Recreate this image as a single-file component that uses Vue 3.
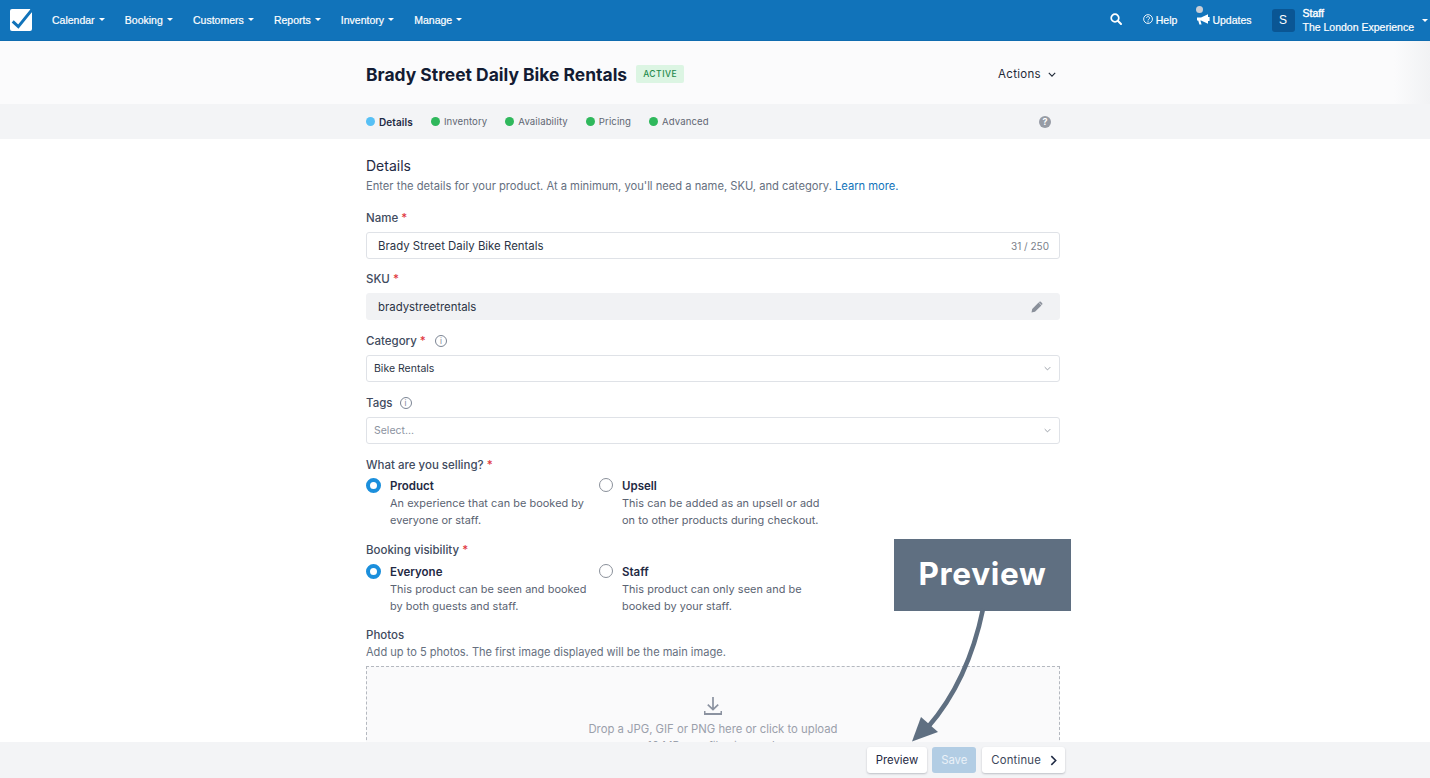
<script setup>
const navItems = ['Calendar', 'Booking', 'Customers', 'Reports', 'Inventory', 'Manage']
const steps = [
  { label: 'Details', active: true },
  { label: 'Inventory' },
  { label: 'Availability' },
  { label: 'Pricing' },
  { label: 'Advanced' }
]
const selling = [
  { title: 'Product', lines: ['An experience that can be booked by', 'everyone or staff.'], on: true },
  { title: 'Upsell', lines: ['This can be added as an upsell or add', 'on to other products during checkout.'] }
]
const visibility = [
  { title: 'Everyone', lines: ['This product can be seen and booked', 'by both guests and staff.'], on: true },
  { title: 'Staff', lines: ['This product can only seen and be', 'booked by your staff.'] }
]
</script>

<template>
  <div class="page">
    <nav class="nav">
      <svg class="logo" viewBox="0 0 22 22" width="22" height="22">
        <path d="M2 0H22V20a2 2 0 0 1-2 2H2a2 2 0 0 1-2-2V2a2 2 0 0 1 2-2Z" fill="#fff" />
        <path d="M16.5 0H22V4L20 0Z" fill="#1173ba" />
        <path d="M2.7 12.4 8.3 17.6 21.6 1.2" fill="none" stroke="#1173ba" stroke-width="3" />
      </svg>
      <ul class="nav-list">
        <li v-for="item in navItems" :key="item" class="nav-item">{{ item }}<i class="caret"></i></li>
      </ul>
      <div class="nav-right">
        <svg class="search" viewBox="0 0 12 12" width="12" height="12">
          <circle cx="5" cy="5" r="3.8" fill="none" stroke="#fff" stroke-width="1.7" />
          <path d="M7.8 7.8 11 11" stroke="#fff" stroke-width="2" stroke-linecap="round" />
        </svg>
        <span class="nav-link help">
          <svg viewBox="0 0 12 12" width="11" height="11">
            <circle cx="5.5" cy="5.5" r="4.8" fill="none" stroke="#fff" stroke-width="1" />
            <path d="M3.9 4.4a1.6 1.6 0 1 1 2.5 1.3c-.6.4-.9.7-.9 1.3" fill="none" stroke="#fff" stroke-width="1" />
            <circle cx="5.5" cy="8.5" r=".7" fill="#fff" />
          </svg>
          Help
        </span>
        <span class="nav-link updates">
          <i class="dot"></i>
          <svg viewBox="0 0 13 11" width="13" height="11">
            <path d="M0 3.5H4L11 0.3V9.7L4 6.6H3.4L4.6 10.6H2.4L1.2 6.6H0Z" fill="#fff" />
            <path d="M11 3h1.6v4H11z" fill="#fff" />
          </svg>
          Updates
        </span>
        <div class="account">
          <span class="avatar">S</span>
          <span class="account-text"><b>Staff</b><span>The London Experience</span></span>
          <i class="caret account-caret"></i>
        </div>
      </div>
    </nav>

    <header class="head">
      <div class="col head-row">
        <h1>Brady Street Daily Bike Rentals</h1>
        <span class="badge">ACTIVE</span>
        <span class="actions">Actions
          <svg viewBox="0 0 10 6" width="8" height="5"><path d="M1 1l4 4 4-4" fill="none" stroke="#1f2937" stroke-width="1.4" /></svg>
        </span>
      </div>
      <i class="edge"></i>
    </header>

    <div class="steps">
      <div class="col steps-row">
        <span v-for="s in steps" :key="s.label" class="step" :class="{ active: s.active }"><i></i>{{ s.label }}</span>
        <span class="qmark">?</span>
      </div>
    </div>

    <main class="col form">
      <h2>Details</h2>
      <p class="sub">Enter the details for your product. At a minimum, you'll need a name, SKU, and category. <a>Learn more.</a></p>

      <label class="lbl l-name">Name <em>*</em></label>
      <div class="field"><span>Brady Street Daily Bike Rentals</span><small>31 / 250</small></div>

      <label class="lbl l-sku">SKU <em>*</em></label>
      <div class="field readonly"><span>bradystreetrentals</span>
        <svg viewBox="0 0 12 12" width="12" height="12"><path d="M0.5 11.5 1.2 8 7.6 1.6 10.4 4.4 4 10.8ZM8.4 .8a1 1 0 0 1 1.4 0l1.4 1.4a1 1 0 0 1 0 1.4l-.5.5L7.9 1.3Z" fill="#8a909a" /></svg>
      </div>

      <label class="lbl l-cat">Category <em>*</em>
        <span class="info i-cat">i</span></label>
      <div class="field select"><span>Bike Rentals</span>
        <svg viewBox="0 0 10 6" width="7" height="5"><path d="M1 1l4 4 4-4" fill="none" stroke="#8a909a" stroke-width="1.2" /></svg>
      </div>

      <label class="lbl l-tags">Tags <span class="info">i</span></label>
      <div class="field select placeholder"><span>Select...</span>
        <svg viewBox="0 0 10 6" width="7" height="5"><path d="M1 1l4 4 4-4" fill="none" stroke="#8a909a" stroke-width="1.2" /></svg>
      </div>

      <label class="lbl l-sell">What are you selling? <em>*</em></label>
      <div class="radios">
        <div v-for="r in selling" :key="r.title" class="radio">
          <i class="circle" :class="{ on: r.on }"></i>
          <div>
            <b>{{ r.title }}</b>
            <p v-for="line in r.lines" :key="line">{{ line }}</p>
          </div>
        </div>
      </div>

      <label class="lbl l-vis">Booking visibility <em>*</em></label>
      <div class="radios">
        <div v-for="r in visibility" :key="r.title" class="radio">
          <i class="circle" :class="{ on: r.on }"></i>
          <div>
            <b>{{ r.title }}</b>
            <p v-for="line in r.lines" :key="line">{{ line }}</p>
          </div>
        </div>
      </div>

      <label class="lbl l-photos">Photos</label>
      <p class="sub photos-sub">Add up to 5 photos. The first image displayed will be the main image.</p>
      <div class="drop">
        <svg viewBox="0 0 18 18" width="18" height="18">
          <path d="M9 0V12M3.8 7.6 9 12.6 14.2 7.6" fill="none" stroke="#8b92a0" stroke-width="1.7" />
          <path d="M0.5 14V17H17.5V14" fill="none" stroke="#8b92a0" stroke-width="2" />
        </svg>
        <span>Drop a JPG, GIF or PNG here or click to upload</span>
        <span>10 MB max file size each</span>
      </div>
    </main>

    <footer class="foot">
      <button class="btn">Preview</button>
      <button class="btn save">Save</button>
      <button class="btn cont">Continue
        <svg viewBox="0 0 8 12" width="7" height="11"><path d="M1.5 1 6.5 6 1.5 11" fill="none" stroke="#1f2a44" stroke-width="1.8" /></svg>
      </button>
    </footer>

    <div class="callout">Preview</div>
    <svg class="arrow" viewBox="0 0 100 150" width="100" height="150">
      <path d="M71 1C64 35 50 80 16 119" fill="none" stroke="#5f6f81" stroke-width="4.6" />
      <path d="M0 133.6 9 109 26 124Z" fill="#5f6f81" />
    </svg>
  </div>
</template>

<style>
html, body { margin: 0; background: #fff; }
</style>

<style scoped>
.page {
  position: relative;
  height: 778px;
  overflow: hidden;
  font-family: Inter, "Liberation Sans", sans-serif;
  color: #1f2937;
  font-size: 11.5px;
}
.col { width: 694px; margin-left: 366px; box-sizing: border-box; }

.nav {
  height: 40px;
  background: #1173ba;
  border-bottom: 1px solid #0f6cb0;
  display: flex;
  align-items: center;
  padding-left: 10px;
  color: #fff;
  font-family: "Liberation Sans", sans-serif;
  font-size: 10.5px;
}
.logo { flex: none; }
.nav-list {
  display: flex;
  list-style: none;
  margin: -1px 0 0 20px;
  padding: 0;
  gap: 20.2px;
}
.nav-item { display: flex; align-items: center; -webkit-text-stroke: 0.2px #fff; }
.caret {
  display: inline-block;
  margin-left: 4px;
  border-top: 3px solid #fff;
  border-left: 3px solid transparent;
  border-right: 3px solid transparent;
}
.nav-right { margin-left: auto; display: flex; align-items: center; height: 100%; }
.nav-link { display: flex; align-items: center; gap: 2px; -webkit-text-stroke: 0.2px #fff; margin-top: -1px; }
.search { margin-right: 21px; margin-top: -3px; }
.help { margin-right: 20px; }
.updates { position: relative; margin-right: 20px; }
.dot {
  position: absolute;
  left: -1px;
  top: -8px;
  width: 7px;
  height: 7px;
  border-radius: 50%;
  background: #c9ced6;
}
.account { display: flex; align-items: center; }
.avatar {
  width: 23px;
  height: 23px;
  border-radius: 3px;
  background: #0a5694;
  display: flex;
  align-items: center;
  justify-content: center;
  font-size: 12px;
  margin-right: 8px;
}
.account-text { display: flex; flex-direction: column; line-height: 14px; -webkit-text-stroke: 0.2px #fff; }
.account-text b { font-weight: 400; -webkit-text-stroke: 0.4px #fff; }
.account-caret { margin: 0 2px 0 8px; border-top-width: 3px; }

.head { position: relative; height: 63px; background: #fbfbfc; }
.head-row { display: flex; align-items: center; height: 100%; padding-top: 3px; }
.edge {
  position: absolute;
  right: 0;
  top: 0;
  bottom: 0;
  width: 36px;
  background: linear-gradient(to right, rgba(243, 244, 246, 0), #f1f2f4);
}
h1 { margin: 0; font-size: 17.45px; font-weight: 700; color: #131c33; letter-spacing: 0; }
.badge {
  margin-left: 9px;
  background: #dcf5e3;
  color: #1f8a4c;
  font-size: 8.5px;
  font-weight: 500;
  letter-spacing: 0.5px;
  padding: 4px 7px;
  border-radius: 2px;
}
.actions {
  margin-left: auto;
  margin-right: 4px;
  font-size: 11.5px;
  display: flex;
  align-items: center;
  gap: 7px;
  letter-spacing: 0.3px;
}

.steps { height: 35px; background: #f3f4f6; }
.steps-row { display: flex; align-items: center; height: 100%; gap: 18px; }
.step { display: flex; align-items: center; font-size: 9.6px; color: #5f6773; letter-spacing: 0.1px; }
.step i {
  width: 9px;
  height: 9px;
  border-radius: 50%;
  background: #2fb85c;
  margin-right: 4px;
}
.step.active { color: #1f2a44; font-weight: 600; font-size: 10px; }
.step.active i { background: #57c0f5; }
.qmark {
  margin-left: auto;
  margin-right: 9px;
  width: 12px;
  height: 12px;
  border-radius: 50%;
  background: #979ca5;
  color: #fff;
  font-size: 9px;
  font-weight: 700;
  line-height: 12px;
  text-align: center;
}

.form { padding-top: 18px; }
h2 { margin: 0; font-size: 14px; font-weight: 400; line-height: 18px; color: #1f2a44; }
.sub { margin: 3px 0 0; font-size: 11.18px; line-height: 16px; color: #667080; }
.sub a { color: #1173ba; }
.lbl { display: block; font-size: 11.5px; font-weight: 500; color: #414b5e; line-height: 14px; margin: 12px 0 7px; }
.lbl em { color: #e0343b; font-style: normal; }
.l-name { margin-top: 17px; }
.l-sku { margin-top: 13px; }
.l-cat { margin-top: 14px; display: flex; align-items: center; gap: 3px; }
.l-tags { margin-top: 14px; display: flex; align-items: center; gap: 7px; }
.info {
  width: 10px;
  height: 10px;
  border: 1px solid #7c8594;
  border-radius: 50%;
  color: #7c8594;
  font-size: 8px;
  line-height: 10px;
  text-align: center;
  font-weight: 400;
}
.i-cat { margin-left: 6px; }
.field {
  height: 27px;
  box-sizing: border-box;
  border: 1px solid #dfe2e7;
  border-radius: 3px;
  padding: 0 10px 0 11px;
  display: flex;
  align-items: center;
  justify-content: space-between;
  background: #fff;
  font-size: 11.4px;
  color: #2b3445;
}
.field small { font-size: 10px; color: #7a808a; }
.readonly { background: #f1f2f4; border-color: #f1f2f4; padding-right: 16px; }
.select { font-size: 10.5px; padding-left: 7px; padding-right: 8px; }
.placeholder { color: #8b92a0; }

.l-sell { margin: 14px 0 7px; }
.l-vis { margin: 14px 0 8px; }
.radios { display: flex; }
.radio { display: flex; width: 233px; }
.circle {
  flex: none;
  width: 12px;
  height: 12px;
  border: 1px solid #8a909a;
  border-radius: 50%;
  margin: -1px 9px 0 0;
  background: #fff;
}
.circle.on { border: 4px solid #1b8fdc; width: 7px; height: 7px; }
.radio b { display: block; font-size: 11.5px; font-weight: 600; line-height: 15px; color: #1f2a44; }
.radio p { margin: 0; font-size: 10.9px; line-height: 17px; color: #5a6372; letter-spacing: 0.05px; }
.radio b + p { margin-top: 1px; }

.l-photos { margin: 13px 0 0; }
.photos-sub { margin-top: 2px; font-size: 11.05px; }
.drop {
  margin-top: 6px;
  height: 130px;
  box-sizing: border-box;
  border: 1px dashed #b4b8bf;
  background: #fafafb;
  display: flex;
  flex-direction: column;
  align-items: center;
  padding-top: 30px;
  font-size: 11.3px;
  line-height: 17px;
  color: #9aa0ab;
}
.drop svg { margin-bottom: 6px; }

.foot {
  position: absolute;
  left: 0;
  right: 0;
  bottom: 0;
  height: 36px;
  background: #f3f4f6;
  display: flex;
  justify-content: flex-end;
  align-items: center;
  padding-right: 365px;
  box-sizing: border-box;
}
.btn {
  height: 26px;
  border: 0;
  border-radius: 3px;
  background: #fff;
  box-shadow: 0 1px 2px rgba(30, 40, 60, 0.25);
  font-family: inherit;
  font-size: 11.3px;
  color: #1f2a44;
  padding: 0 9px;
  display: flex;
  align-items: center;
}
.save { background: #b2cde4; color: #eaf1f8; box-shadow: none; margin-left: 5px; }
.cont { gap: 9px; color: #3c465a; letter-spacing: 0.2px; margin-left: 6px; padding: 0 8px 0 9px; }

.callout {
  position: absolute;
  left: 894px;
  top: 539px;
  width: 177px;
  height: 72px;
  padding-bottom: 4px;
  box-sizing: border-box;
  background: #5f6f81;
  color: #fff;
  font-family: Inter, sans-serif;
  font-weight: 700;
  font-size: 31.5px;
  letter-spacing: 0.7px;
  display: flex;
  align-items: center;
  justify-content: center;
}
.arrow { position: absolute; left: 912px; top: 608px; }
</style>
